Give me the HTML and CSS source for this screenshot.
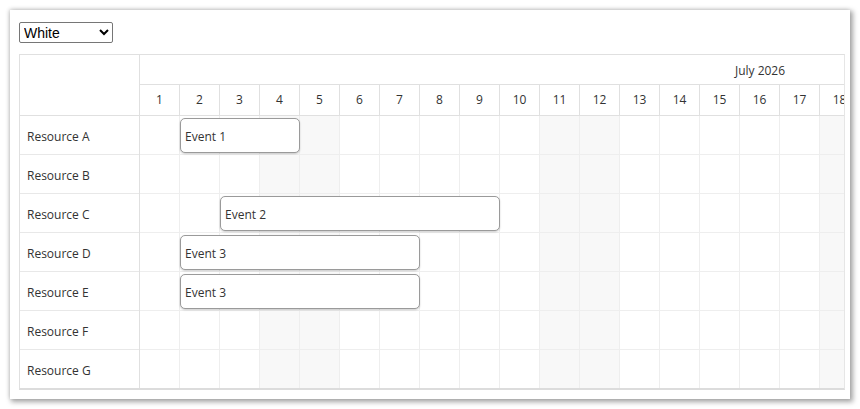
FILE: index.html
```html
<!DOCTYPE html>
<html>
<head>
<meta charset="utf-8">
<link rel="stylesheet" href="styles.css">
</head>
<body>
<div class="card">
  <select class="theme"><option>White</option><option>Green</option><option>Blue</option></select>
  <div class="scheduler">
    <div class="rowheaders">
      <div class="corner"></div>
      <div class="rh">Resource A</div>
      <div class="rh">Resource B</div>
      <div class="rh">Resource C</div>
      <div class="rh">Resource D</div>
      <div class="rh">Resource E</div>
      <div class="rh">Resource F</div>
      <div class="rh">Resource G</div>
    </div>
    <div class="timeline">
      <div class="inner">
        <div class="month">July 2026</div>
        <div class="days" id="days"></div>
        <div id="rows"></div>
      </div>
    </div>
  </div>
</div>
<script src="app.js"></script>
</body>
</html>
```
FILE: app.js
```js
const days = document.getElementById('days');
// July 1 2026 is a Wednesday; weekday index: 0 = Sunday, 6 = Saturday
const isWeekend = d => { const w = (d + 2) % 7; return w === 0 || w === 6; };
for (let d = 1; d <= 31; d++) {
  const c = document.createElement('div');
  c.className = 'day';
  c.textContent = d;
  days.appendChild(c);
}
const events = { 0: [2, 4, 'Event 1'], 2: [3, 9, 'Event 2'], 3: [2, 7, 'Event 3'], 4: [2, 7, 'Event 3'] };
const rows = document.getElementById('rows');
for (let r = 0; r < 7; r++) {
  const row = document.createElement('div');
  row.className = 'row';
  for (let d = 1; d <= 31; d++) {
    const c = document.createElement('div');
    c.className = 'cell' + (isWeekend(d) ? ' we' : '');
    row.appendChild(c);
  }
  if (events[r]) {
    const [s, e, t] = events[r];
    const ev = document.createElement('div');
    ev.className = 'event';
    ev.style.left = ((s - 1) * 40) + 'px';
    ev.style.width = ((e - s + 1) * 40) + 'px';
    ev.textContent = t;
    row.appendChild(ev);
  }
  rows.appendChild(row);
}
```
FILE: styles.css
```css
* { box-sizing: border-box; }
html, body { margin: 0; padding: 0; background: #fff; }
body { font-family: "Open Sans", "Noto Sans", sans-serif; font-size: 12px; color: #333; }
.card {
  margin: 10px;
  width: 840px;
  height: 389px;
  padding: 12px 9px 0 9px;
  background: #fff;
  box-shadow: 2px 2px 5px 1px rgba(0,0,0,0.35), -1px -1px 4px rgba(0,0,0,0.12);
}
.theme {
  display: block;
  width: 94px;
  height: 21px;
  font-family: "Liberation Sans", Arial, sans-serif;
  font-size: 14px;
  color: #000;
  border: 1px solid #767676;
  border-radius: 2px;
  background: #fff;
  padding: 0;
  margin-bottom: 11px;
}
.scheduler {
  display: flex;
  width: 826px;
  border: 1px solid #e0e0e0;
  border-bottom: 2px solid #dcdcdc;
  border-right: 1px solid #e6e6e6;
}
.rowheaders { width: 120px; flex: none; border-right: 1px solid #e0e0e0; }
.corner { height: 61px; border-bottom: 1px solid #e0e0e0; }
.rh {
  height: 39px;
  display: flex;
  align-items: center;
  padding: 2px 0 0 7px;
  border-bottom: 1px solid #e8e8e8;
}
.rh:last-child { border-bottom: none; height: 38px; }
.timeline { flex: 1; overflow: hidden; }
.inner { width: 1240px; }
.month {
  height: 30px;
  border-bottom: 1px solid #e0e0e0;
  text-align: center;
  line-height: 31px;
}
.days { display: flex; height: 31px; border-bottom: 1px solid #e0e0e0; }
.day {
  width: 40px;
  flex: none;
  border-right: 1px solid #e0e0e0;
  text-align: center;
  line-height: 30px;
}
.row { position: relative; display: flex; height: 39px; border-bottom: 1px solid #eeeeee; }
.row:last-child { border-bottom: none; height: 38px; }
.cell { width: 40px; flex: none; border-right: 1px solid #eeeeee; }
.cell.we { background: #f8f8f8; }
.event {
  position: absolute;
  top: 2px;
  height: 35px;
  background: #fff;
  border: 1px solid #9a9a9a;
  border-radius: 5px;
  box-shadow: 0 1px 2px rgba(0,0,0,0.2);
  padding: 1px 0 0 4px;
  display: flex;
  align-items: center;
  color: #333;
}
```
